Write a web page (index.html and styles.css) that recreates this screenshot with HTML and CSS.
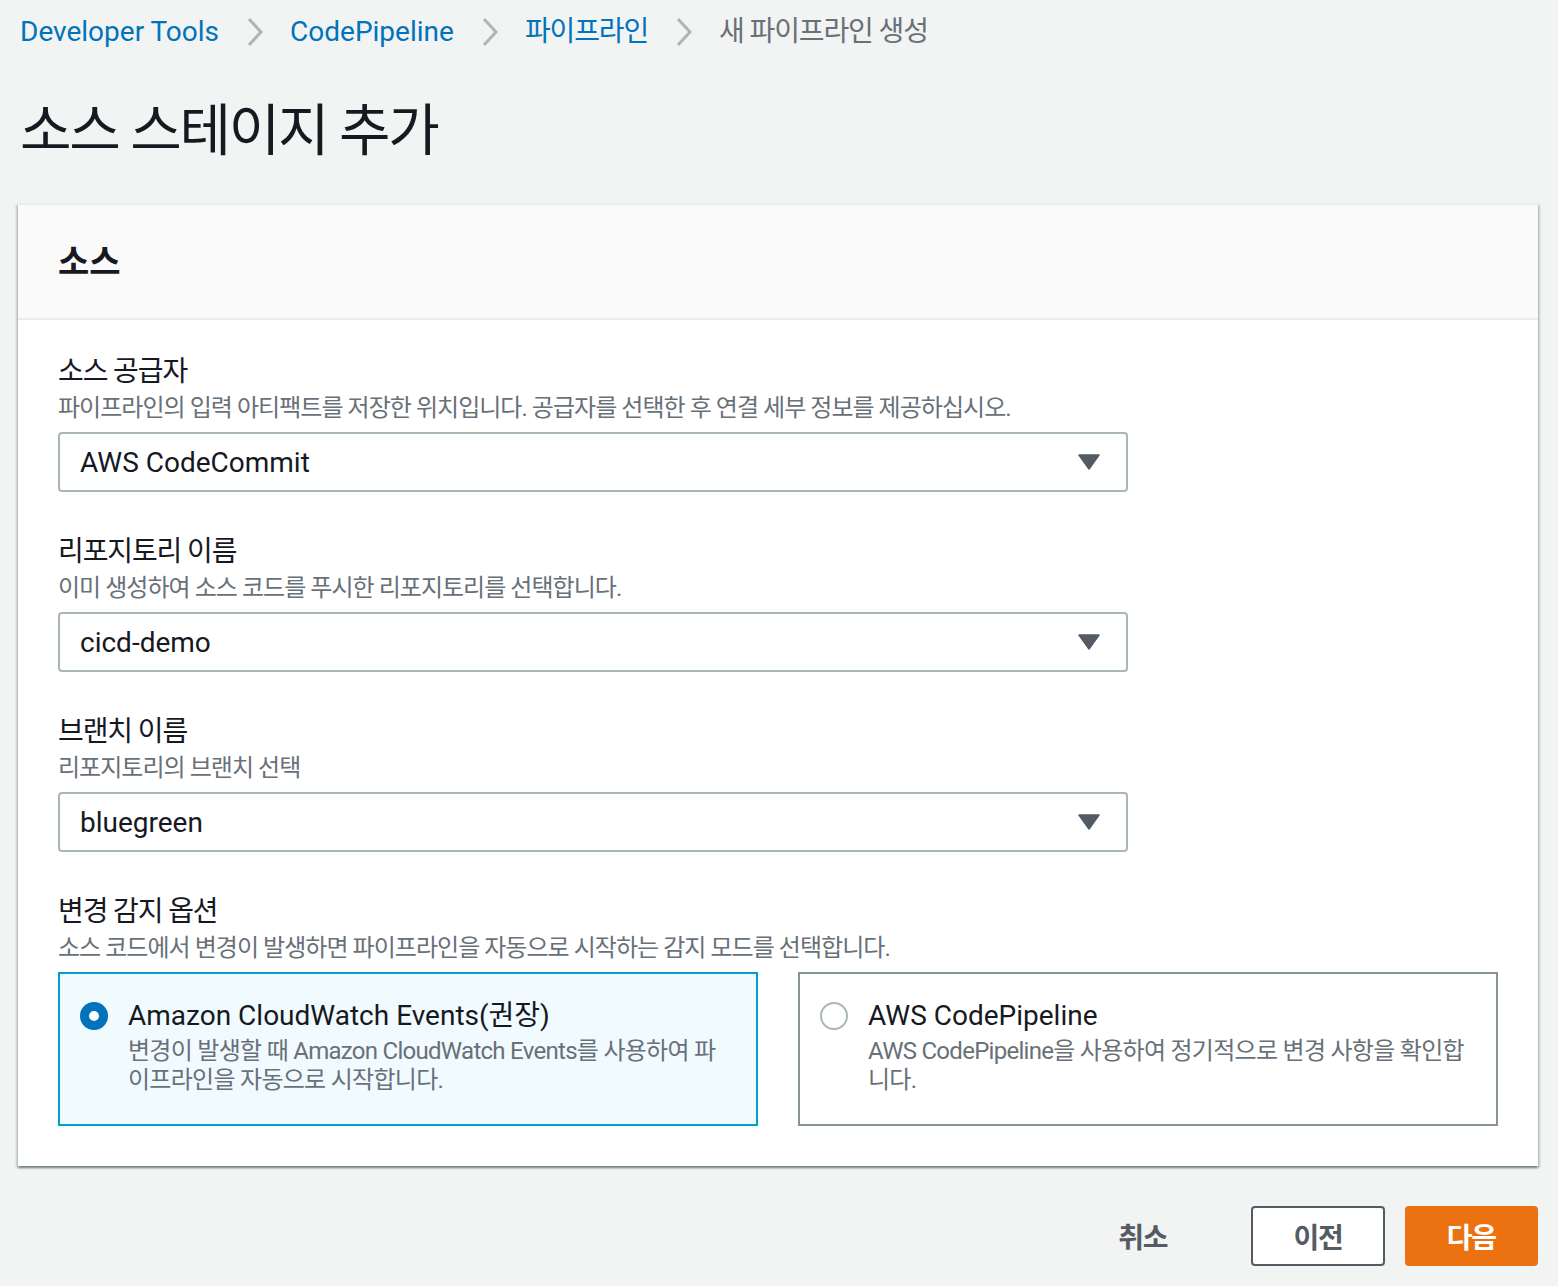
FILE: index.html
```html
<!DOCTYPE html>
<html lang="ko">
<head>
<meta charset="utf-8">
<title>소스 스테이지 추가</title>
<link rel="stylesheet" href="styles.css">
</head>
<body>
<div class="page">
  <nav class="crumbs">
    <a class="crumb-link" href="#">Developer Tools</a>
    <span class="sep"><svg width="16" height="30" viewBox="0 0 16 30"><path d="M2 2 L14 15 L2 28" fill="none" stroke="#aab7b8" stroke-width="3"/></svg></span>
    <a class="crumb-link" href="#">CodePipeline</a>
    <span class="sep"><svg width="16" height="30" viewBox="0 0 16 30"><path d="M2 2 L14 15 L2 28" fill="none" stroke="#aab7b8" stroke-width="3"/></svg></span>
    <a class="crumb-link ko" href="#">파이프라인</a>
    <span class="sep"><svg width="16" height="30" viewBox="0 0 16 30"><path d="M2 2 L14 15 L2 28" fill="none" stroke="#aab7b8" stroke-width="3"/></svg></span>
    <span class="crumb-current ko">새 파이프라인 생성</span>
  </nav>

  <h1 class="title ko">소스 스테이지 추가</h1>

  <section class="card">
    <div class="card-head"><h2 class="card-title">소스</h2></div>
    <div class="card-body">
      <div class="field">
        <div class="label ko">소스 공급자</div>
        <div class="desc ko">파이프라인의 입력 아티팩트를 저장한 위치입니다. 공급자를 선택한 후 연결 세부 정보를 제공하십시오.</div>
        <div class="select">
          <span class="select-value">AWS CodeCommit</span>
          <svg class="caret" width="22" height="16" viewBox="0 0 22 16"><path d="M1 1 H21 L11 15 Z" fill="#545b64" stroke="#545b64" stroke-width="1.5" stroke-linejoin="round"/></svg>
        </div>
      </div>
      <div class="field">
        <div class="label ko">리포지토리 이름</div>
        <div class="desc ko">이미 생성하여 소스 코드를 푸시한 리포지토리를 선택합니다.</div>
        <div class="select">
          <span class="select-value">cicd-demo</span>
          <svg class="caret" width="22" height="16" viewBox="0 0 22 16"><path d="M1 1 H21 L11 15 Z" fill="#545b64" stroke="#545b64" stroke-width="1.5" stroke-linejoin="round"/></svg>
        </div>
      </div>
      <div class="field">
        <div class="label ko">브랜치 이름</div>
        <div class="desc ko">리포지토리의 브랜치 선택</div>
        <div class="select">
          <span class="select-value">bluegreen</span>
          <svg class="caret" width="22" height="16" viewBox="0 0 22 16"><path d="M1 1 H21 L11 15 Z" fill="#545b64" stroke="#545b64" stroke-width="1.5" stroke-linejoin="round"/></svg>
        </div>
      </div>
      <div class="field field-last">
        <div class="label ko">변경 감지 옵션</div>
        <div class="desc ko">소스 코드에서 변경이 발생하면 파이프라인을 자동으로 시작하는 감지 모드를 선택합니다.</div>
        <div class="tiles">
          <div class="tile tile-selected">
            <span class="radio radio-on"></span>
            <div class="tile-text">
              <div class="tile-title">Amazon CloudWatch Events(권장)</div>
              <div class="tile-desc">변경이 발생할 때 Amazon CloudWatch Events를 사용하여 파이프라인을 자동으로 시작합니다.</div>
            </div>
          </div>
          <div class="tile">
            <span class="radio"></span>
            <div class="tile-text">
              <div class="tile-title">AWS CodePipeline</div>
              <div class="tile-desc">AWS CodePipeline을 사용하여 정기적으로 변경 사항을 확인합니다.</div>
            </div>
          </div>
        </div>
      </div>
    </div>
  </section>

  <div class="actions">
    <button class="btn btn-link ko">취소</button>
    <button class="btn btn-normal ko">이전</button>
    <button class="btn btn-primary ko">다음</button>
  </div>
</div>
</body>
</html>
```

FILE: styles.css
```css
* { box-sizing: border-box; }

html, body {
  margin: 0;
  padding: 0;
  background: #f2f3f3;
}

body {
  font-family: Roboto, "Noto Sans CJK KR", sans-serif;
  font-feature-settings: "palt";
  color: #16191f;
}

.ko {
  letter-spacing: -0.04em;
}

.page {
  padding: 0 20px 0 18px;
}

.crumbs {
  display: flex;
  align-items: center;
  height: 52px;
  padding-top: 12px;
  padding-left: 2px;
  font-size: 28px;
  line-height: 40px;
}

.crumb-link {
  color: #0073bb;
  text-decoration: none;
}

.crumb-current {
  color: #687078;
}

.sep {
  display: flex;
  align-items: center;
  margin: 0 27px 0 28px;
}

.title {
  margin: 47px 0 0 2px;
  font-size: 56px;
  line-height: 64px;
  font-weight: 400;
  color: #16191f;
}

.card {
  margin-top: 40px;
  background: #fff;
  box-shadow: 0 2px 2px 0 rgba(0, 28, 36, 0.35), 2px 2px 2px 0 rgba(0, 28, 36, 0.15), -2px 2px 2px 0 rgba(0, 28, 36, 0.15);
  border-top: 2px solid #eaeded;
}

.card-head {
  height: 115px;
  background: #fafafa;
  border-bottom: 2px solid #eaeded;
  padding: 0 40px;
  display: flex;
  align-items: center;
}

.card-title {
  margin: 0;
  font-size: 34px;
  font-weight: 700;
  line-height: 40px;
}

.card-body {
  padding: 32px 40px 40px;
}

.field {
  margin-bottom: 40px;
}

.field-last {
  margin-bottom: 0;
}

.label {
  font-size: 28px;
  line-height: 40px;
  color: #16191f;
}

.desc {
  font-size: 24px;
  line-height: 32px;
  color: #687078;
}

.select {
  margin-top: 8px;
  width: 1070px;
  height: 60px;
  border: 2px solid #aab7b8;
  border-radius: 4px;
  background: #fff;
  display: flex;
  align-items: center;
  justify-content: space-between;
  padding: 0 26px 0 20px;
}

.select-value {
  font-size: 28px;
  color: #16191f;
}

.tiles {
  margin-top: 8px;
  display: grid;
  grid-template-columns: 1fr 1fr;
  gap: 40px;
}

.tile {
  display: flex;
  gap: 20px;
  align-items: flex-start;
  min-height: 154px;
  border: 2px solid #879596;
  padding: 26px 20px 20px;
  background: #fff;
}

.tile-selected {
  border-color: #00a1c9;
  background: #f1faff;
}

.radio {
  flex: none;
  width: 28px;
  height: 28px;
  margin-top: 2px;
  border-radius: 50%;
  border: 2px solid #aab7b8;
  background: #fff;
}

.radio-on {
  border: 9px solid #0073bb;
  background: #fff;
}

.tile-text {
  margin-top: -4px;
}

.tile-title {
  font-size: 28px;
  line-height: 40px;
  color: #16191f;
}

.tile-desc {
  margin-top: 1px;
  font-size: 24px;
  line-height: 29px;
  letter-spacing: -0.03em;
  color: #687078;
}

.actions {
  margin-top: 40px;
  display: flex;
  justify-content: flex-end;
  align-items: center;
  gap: 20px;
}

.btn {
  font-family: inherit;
  font-feature-settings: "palt";
  font-size: 28px;
  font-weight: 700;
  height: 60px;
  padding: 0 40px;
  border-radius: 4px;
  border: 2px solid transparent;
  cursor: pointer;
}

.btn-link {
  background: transparent;
  color: #545b64;
  margin-right: 22px;
}

.btn-normal {
  background: #fff;
  border-color: #545b64;
  color: #545b64;
}

.btn-primary {
  background: #ec7211;
  border-color: #ec7211;
  color: #fff;
}
```
